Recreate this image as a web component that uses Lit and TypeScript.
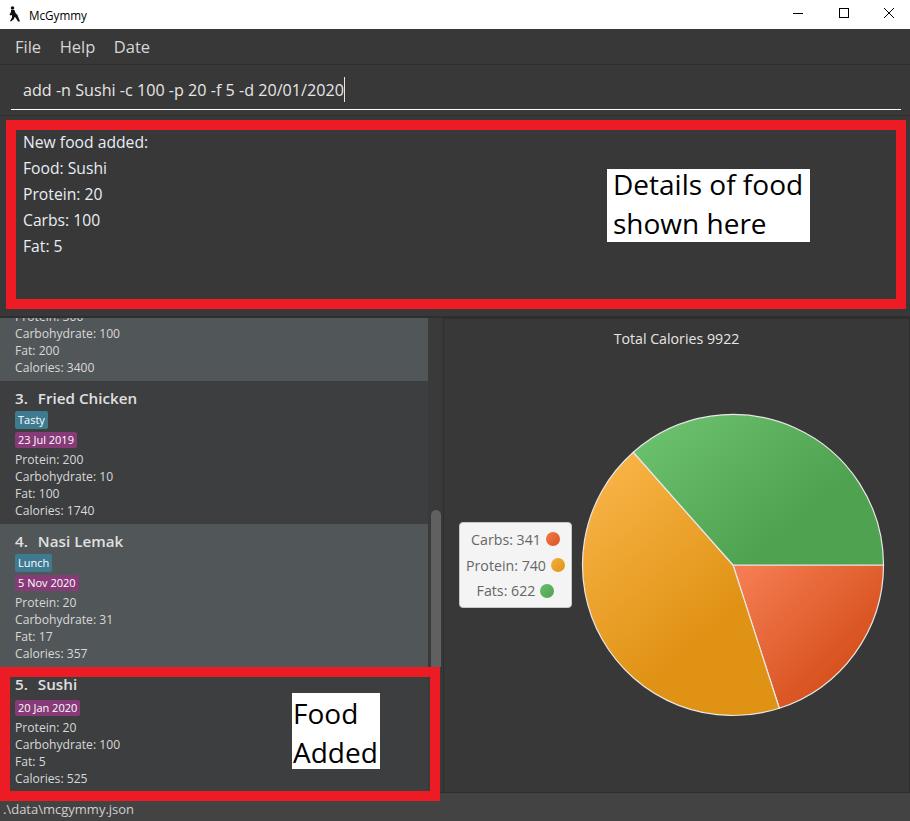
import { LitElement, html, css, svg } from 'lit';
import { customElement } from 'lit/decorators.js';

interface Food {
  index: number;
  name: string;
  tag?: string;
  date: string;
  protein: number;
  carbs: number;
  fat: number;
  calories: number;
}

const FOODS: Food[] = [
  { index: 3, name: 'Fried Chicken', tag: 'Tasty', date: '23 Jul 2019', protein: 200, carbs: 10, fat: 100, calories: 1740 },
  { index: 4, name: 'Nasi Lemak', tag: 'Lunch', date: '5 Nov 2020', protein: 20, carbs: 31, fat: 17, calories: 357 },
  { index: 5, name: 'Sushi', date: '20 Jan 2020', protein: 20, carbs: 100, fat: 5, calories: 525 },
];

const SLICES = [
  { label: 'Carbs', value: 341, fill: 'url(#carbs)', dot: 'dot-carbs' },
  { label: 'Protein', value: 740, fill: 'url(#protein)', dot: 'dot-protein' },
  { label: 'Fats', value: 622, fill: 'url(#fats)', dot: 'dot-fats' },
];

@customElement('app-root')
export class AppRoot extends LitElement {
  static override styles = css`
    :host {
      display: block;
      position: relative;
      width: 910px;
      height: 821px;
      overflow: hidden;
      background: #383838;
      font-family: 'Open Sans', 'Liberation Sans', sans-serif;
      color: #fff;
    }
    .titlebar {
      height: 29px;
      margin-right: -2px;
      background: #fff;
      color: #000;
      display: flex;
      align-items: center;
      font-size: 11.7px;
      padding-left: 9px;
    }
    .titlebar .app-icon {
      margin-bottom: 2px;
    }
    .titlebar .name {
      margin-left: 8px;
      flex: 1;
    }
    .win {
      width: 45.5px;
      height: 29px;
      box-sizing: border-box;
      padding-bottom: 3px;
      display: flex;
      align-items: center;
      justify-content: center;
    }
    .menu {
      height: 35px;
      display: flex;
      align-items: center;
      gap: 18.5px;
      padding-left: 15px;
      font-size: 16.5px;
      color: #d6d6d6;
      border-bottom: 1px solid #2e2e2e;
    }
    .command {
      height: 51px;
      box-sizing: border-box;
      padding: 0 9px 5px 11px;
      display: flex;
      border-bottom: 1px solid #2e2e2e;
    }
    .command .field {
      flex: 1;
      border-bottom: 1px solid #fff;
      padding: 14px 0 0 12px;
      font-size: 16.15px;
      line-height: 22px;
      color: #e6e6e6;
      display: flex;
      align-items: flex-start;
    }
    .caret {
      width: 1px;
      height: 25px;
      margin-top: -2px;
      background: #e6e6e6;
    }
    .result {
      height: 202px;
      box-sizing: border-box;
      padding: 13px 23px;
      font-size: 15.7px;
      line-height: 26px;
      color: #e8eef4;
      border-bottom: 2px solid #2e2e2e;
    }
    .split {
      height: 474px;
      display: flex;
      gap: 2px;
    }
    .list-pane {
      width: 441px;
      display: flex;
      overflow: hidden;
    }
    .list {
      width: 428px;
      height: 100%;
      display: flex;
      flex-direction: column;
      justify-content: flex-end;
      overflow: hidden;
    }
    .card {
      flex: none;
      box-sizing: border-box;
      height: 143px;
      padding: 6px 15px 0;
      background: #3c3e40;
      font-size: 12.15px;
      line-height: 17px;
      color: #d8d8d8;
    }
    .card.last {
      height: 125px;
    }
    .card.last .badge.date {
      margin-top: 5px;
    }
    .card.alt {
      background: #515658;
    }
    .card.cut {
      height: 64px;
      padding: 0 15px 5px;
      display: flex;
      flex-direction: column;
      justify-content: flex-end;
    }
    .card .title {
      font-size: 15.2px;
      font-weight: 600;
      line-height: 22px;
      color: #e0e0e0;
      display: flex;
      gap: 10px;
    }
    .badge {
      display: table;
      border-radius: 2px;
      padding: 0 3px;
      font-size: 11px;
      color: #fff;
      line-height: 16px;
      margin: 1px 0 3px;
    }
    .badge.tag {
      background: #3e7b91;
      line-height: 18px;
      margin-top: 2px;
    }
    .badge.date {
      background: #863a78;
      margin-bottom: 3px;
    }
    .scrollbar {
      flex: 1;
      display: flex;
      flex-direction: column;
      justify-content: flex-end;
      padding-left: 3px;
      background: #3a3a3a;
    }
    .thumb {
      height: 157px;
      margin-bottom: 125px;
      background: #606060;
      border-radius: 5px 5px 0 0;
    }
    .chart {
      flex: 1;
      position: relative;
      border: 1px solid #2e2e2e;
      border-bottom: none;
    }
    .chart-title {
      text-align: center;
      padding-top: 10px;
      font-size: 14.2px;
      font-weight: 500;
      line-height: 20px;
      color: #e6e6e6;
    }
    .pie {
      position: absolute;
      left: 137px;
      top: 94px;
    }
    .legend {
      position: absolute;
      left: 15px;
      top: 203px;
      width: 113px;
      height: 86px;
      box-sizing: border-box;
      border: 1px solid #c8c8c8;
      border-radius: 4px;
      background: #f4f4f4;
      color: #666;
      font-size: 14.2px;
      display: flex;
      flex-direction: column;
      justify-content: space-evenly;
      align-items: center;
      padding: 0;
    }
    .legend-row {
      display: flex;
      align-items: center;
      gap: 5px;
    }
    .dot {
      width: 14px;
      height: 14px;
      border-radius: 50%;
    }
    .dot-carbs { background: linear-gradient(135deg, #f3794f, #d9541f); }
    .dot-protein { background: linear-gradient(135deg, #f5b041, #e09214); }
    .dot-fats { background: linear-gradient(135deg, #6abf6c, #4fa24f); }
    .status {
      height: 29px;
      border-top: 1px solid #2e2e2e;
      background: #434343;
      box-sizing: border-box;
      padding: 7px 0 0 3px;
      font-size: 13px;
      line-height: 18px;
      color: #d0d0d0;
    }
    .mark {
      position: absolute;
      box-sizing: border-box;
      border: 10px solid #ed1c24;
    }
    .mark-result {
      left: 6px;
      top: 120px;
      width: 900px;
      height: 189px;
    }
    .mark-food {
      left: 0;
      top: 667px;
      width: 440px;
      height: 134px;
    }
    .note {
      position: absolute;
      background: #fff;
      color: #000;
      font-size: 28px;
      line-height: 39px;
      box-sizing: border-box;
    }
    .note-result {
      left: 607px;
      top: 169px;
      width: 203px;
      height: 73px;
      padding-left: 6px;
    }
    .note-result div {
      margin-top: -4px;
    }
    .note-food {
      left: 292px;
      top: 693px;
      width: 88px;
      height: 76px;
      padding-left: 1px;
    }
    .note-food div {
      margin-top: 1px;
    }
  `;

  private renderPie() {
    const cx = 152;
    const cy = 152;
    const r = 150.5;
    const total = SLICES.reduce((sum, s) => sum + s.value, 0);
    let angle = 0;
    const paths = SLICES.map((s) => {
      const start = angle;
      angle += (s.value / total) * Math.PI * 2;
      const x1 = cx + r * Math.cos(start);
      const y1 = cy + r * Math.sin(start);
      const x2 = cx + r * Math.cos(angle);
      const y2 = cy + r * Math.sin(angle);
      const large = angle - start > Math.PI ? 1 : 0;
      return svg`<path d="M${cx} ${cy}L${x1} ${y1}A${r} ${r} 0 ${large} 1 ${x2} ${y2}Z"
        fill=${s.fill} stroke="#e8e8e8" stroke-width="1.2"></path>`;
    });
    return html`<svg class="pie" width="304" height="304" viewBox="0 0 304 304">
      <defs>
        <linearGradient id="carbs" gradientUnits="userSpaceOnUse" x1="160" y1="160" x2="260" y2="260">
          <stop offset="0" stop-color="#f57c52"></stop>
          <stop offset="1" stop-color="#d6511d"></stop>
        </linearGradient>
        <linearGradient id="protein" gradientUnits="userSpaceOnUse" x1="30" y1="60" x2="150" y2="200">
          <stop offset="0" stop-color="#f7b244"></stop>
          <stop offset="1" stop-color="#e09214"></stop>
        </linearGradient>
        <linearGradient id="fats" gradientUnits="userSpaceOnUse" x1="90" y1="10" x2="190" y2="130">
          <stop offset="0" stop-color="#6abf6c"></stop>
          <stop offset="1" stop-color="#4fa24f"></stop>
        </linearGradient>
      </defs>
      ${paths}
    </svg>`;
  }

  private renderCard(food: Food, i: number) {
    const cls = `card ${i % 2 === 1 ? 'alt' : ''} ${food.tag ? '' : 'last'}`;
    return html`<div class=${cls}>
      <div class="title"><span>${food.index}.</span><span>${food.name}</span></div>
      ${food.tag ? html`<span class="badge tag">${food.tag}</span>` : ''}
      <span class="badge date">${food.date}</span>
      <div>Protein: ${food.protein}</div>
      <div>Carbohydrate: ${food.carbs}</div>
      <div>Fat: ${food.fat}</div>
      <div>Calories: ${food.calories}</div>
    </div>`;
  }

  override render() {
    return html`
      <div class="titlebar">
        <svg class="app-icon" width="12" height="16" viewBox="0 0 12 16">
          <circle cx="3.500" cy="2" r="1.800" fill="#111"></circle>
          <path d="M2 4h3.500l1 3 2 2 2.500 6.500H9L6.500 11.500 5.500 11l-.5 2-3 2.500-1-.5 2-3.500V9L1.500 9.500.5 8.500 2 6z" fill="#111"></path>
        </svg>
        <span class="name">McGymmy</span>
        <div class="win">
          <svg width="12" height="12" viewBox="0 0 12 12"><path d="M1 6.500h10" stroke="#000"></path></svg>
        </div>
        <div class="win">
          <svg width="12" height="12" viewBox="0 0 12 12"><rect x="1.500" y="1.500" width="9" height="9" fill="none" stroke="#000"></rect></svg>
        </div>
        <div class="win">
          <svg width="12" height="12" viewBox="0 0 12 12"><path d="M1 1l10 10M11 1L1 11" stroke="#000"></path></svg>
        </div>
      </div>
      <div class="menu"><span>File</span><span>Help</span><span>Date</span></div>
      <div class="command">
        <div class="field"><span>add -n Sushi -c 100 -p 20 -f 5 -d 20/01/2020</span><span class="caret"></span></div>
      </div>
      <div class="result">
        <div>New food added:</div>
        <div>Food: Sushi</div>
        <div>Protein: 20</div>
        <div>Carbs: 100</div>
        <div>Fat: 5</div>
      </div>
      <div class="split">
        <div class="list-pane">
          <div class="list">
            <div class="card alt cut">
              <div>Protein: 300</div>
              <div>Carbohydrate: 100</div>
              <div>Fat: 200</div>
              <div>Calories: 3400</div>
            </div>
            ${FOODS.map((f, i) => this.renderCard(f, i))}
          </div>
          <div class="scrollbar"><div class="thumb"></div></div>
        </div>
        <div class="chart">
          <div class="chart-title">Total Calories 9922</div>
          ${this.renderPie()}
          <div class="legend">
            ${SLICES.map((s) => html`<div class="legend-row"><span>${s.label}: ${s.value}</span><span class="dot ${s.dot}"></span></div>`)}
          </div>
        </div>
      </div>
      <div class="status">.\\data\\mcgymmy.json</div>
      <div class="mark mark-result"></div>
      <div class="mark mark-food"></div>
      <div class="note note-result"><div>Details of food shown here</div></div>
      <div class="note note-food"><div>Food Added</div></div>
    `;
  }
}
